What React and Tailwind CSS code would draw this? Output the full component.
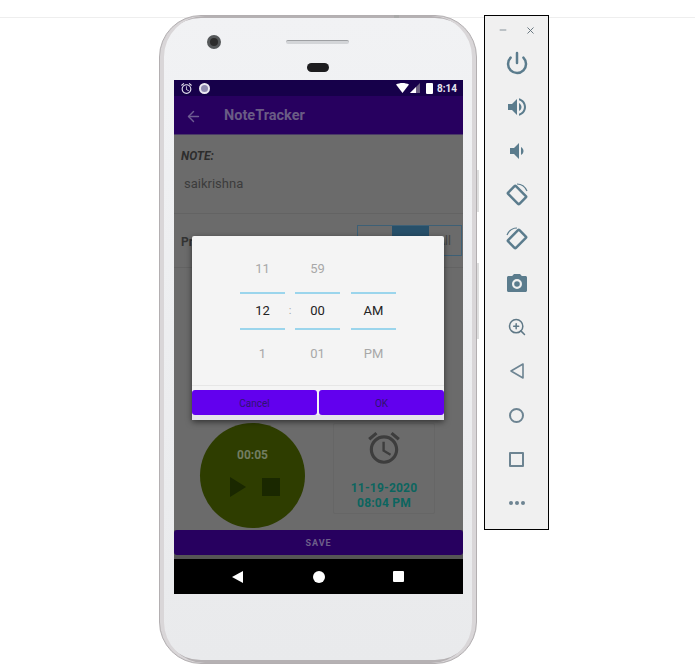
import React from 'react';
import { Power, ZoomIn, X, Minus, ArrowLeft } from 'lucide-react';

const ToolIcon = ({ children }) => (
  <div className="h-11 flex items-center justify-center">{children}</div>
);

const VolumeUp = () => (
  <svg width="24" height="24" viewBox="0 0 24 24" fill="#5b7c8d">
    <path d="M3 9v6h4l5 5V4L7 9H3zm13.5 3c0-1.77-1.02-3.29-2.5-4.03v8.05c1.48-.73 2.5-2.25 2.5-4.02zM14 3.23v2.06c2.89.86 5 3.54 5 6.71s-2.11 5.85-5 6.71v2.06c4.01-.91 7-4.49 7-8.77s-2.99-7.86-7-8.77z" />
  </svg>
);

const VolumeDown = () => (
  <svg width="24" height="24" viewBox="0 0 24 24" fill="#5b7c8d">
    <path d="M18.5 12c0-1.77-1.02-3.29-2.5-4.03v8.05c1.48-.73 2.5-2.25 2.5-4.02zM5 9v6h4l5 5V4L9 9H5z" />
  </svg>
);

const RotateRight = () => (
  <svg width="24" height="24" viewBox="0 0 24 24" fill="none" stroke="#5b7c8d">
    <rect x="4" y="6.5" width="16" height="11" rx="1" strokeWidth="2.5" transform="rotate(45 12 12)" />
    <path d="M12 1C16 1 20 3.5 22 8" strokeWidth="1.2" />
  </svg>
);

const RotateLeft = () => (
  <svg width="24" height="24" viewBox="0 0 24 24" fill="none" stroke="#5b7c8d">
    <rect x="4" y="6.5" width="16" height="11" rx="1" strokeWidth="2.5" transform="rotate(-45 12 12)" />
    <path d="M12 1C8 1 4 3.5 2 8" strokeWidth="1.2" />
  </svg>
);

const Camera = () => (
  <svg width="24" height="24" viewBox="0 0 24 24" fill="#5b7c8d">
    <path fillRule="evenodd" d="M9 3L7.17 5H3.5C2.7 5 2 5.7 2 6.5v13c0 .8.7 1.5 1.5 1.5h17c.8 0 1.5-.7 1.5-1.5v-13c0-.8-.7-1.5-1.5-1.5h-3.67L15 3H9zm3 15a5 5 0 1 1 0-10 5 5 0 0 1 0 10zm0-2.2a2.8 2.8 0 1 0 0-5.6 2.8 2.8 0 0 0 0 5.6z" />
  </svg>
);

const AlarmIcon = () => (
  <svg width="38" height="38" viewBox="0 0 24 24" fill="#3d3d3d">
    <path d="M22 5.72l-4.6-3.86-1.29 1.53 4.6 3.86L22 5.72zM7.88 3.39L6.6 1.86 2 5.71l1.29 1.53 4.59-3.85zM12.5 8H11v6l4.75 2.85.75-1.23-4-2.37V8zM12 4c-4.97 0-9 4.03-9 9s4.03 9 9 9 9-4.03 9-9-4.03-9-9-9zm0 16c-3.87 0-7-3.13-7-7s3.13-7 7-7 7 3.13 7 7-3.13 7-7 7z" />
  </svg>
);

const SidePanel = () => (
  <div className="w-[65px] h-[515px] border border-black bg-[#f0f0f0] shrink-0">
    <div className="h-[25px] flex items-center justify-between pl-[13px] pr-[12px] pt-[3px]">
      <Minus size={10} color="#7d8b93" strokeWidth={2.2} />
      <X size={11} color="#5f6f78" strokeWidth={2} />
    </div>
    <ToolIcon><Power size={24} color="#5b7c8d" strokeWidth={2.5} /></ToolIcon>
    <ToolIcon><VolumeUp /></ToolIcon>
    <ToolIcon><VolumeDown /></ToolIcon>
    <ToolIcon><RotateRight /></ToolIcon>
    <ToolIcon><RotateLeft /></ToolIcon>
    <ToolIcon><Camera /></ToolIcon>
    <ToolIcon><ZoomIn size={20} color="#5f7886" strokeWidth={1.8} /></ToolIcon>
    <ToolIcon>
      <svg width="18" height="18" viewBox="0 0 18 18" fill="none" stroke="#6d8492" strokeWidth="1.6">
        <path d="M15 2v14L3 9z" strokeLinejoin="round" />
      </svg>
    </ToolIcon>
    <ToolIcon><div className="w-[15px] h-[15px] rounded-full border-2 border-[#6d8492]" /></ToolIcon>
    <ToolIcon><div className="w-[15px] h-[15px] rounded-[1px] border-2 border-[#6d8492]" /></ToolIcon>
    <ToolIcon>
      <div className="flex gap-[2px]">
        <div className="w-1 h-1 rounded-full bg-[#6d8492]" />
        <div className="w-1 h-1 rounded-full bg-[#6d8492]" />
        <div className="w-1 h-1 rounded-full bg-[#6d8492]" />
      </div>
    </ToolIcon>
  </div>
);

const StatusBar = () => (
  <div className="h-4 bg-[#16004a] flex items-center justify-between pl-[6px] pr-[6px]">
    <div className="flex items-center gap-[6px]">
      <svg width="13" height="13" viewBox="0 0 24 24" fill="#e4e0ee">
        <path d="M22 5.72l-4.6-3.86-1.29 1.53 4.6 3.86L22 5.72zM7.88 3.39L6.6 1.86 2 5.71l1.29 1.53 4.59-3.85zM12.5 8H11v6l4.75 2.85.75-1.23-4-2.37V8zM12 4c-4.97 0-9 4.03-9 9s4.03 9 9 9 9-4.03 9-9-4.03-9-9-9zm0 16c-3.87 0-7-3.13-7-7s3.13-7 7-7 7 3.13 7 7-3.13 7-7 7z" />
      </svg>
      <div className="w-[11px] h-[11px] rounded-full bg-[#8f8ab0] border-2 border-[#ece9f2]" />
    </div>
    <div className="flex items-center">
      <svg width="13" height="10" viewBox="0 0 13 10" fill="#ffffff"><path d="M0 1.5C3.8-.5 9.2-.5 13 1.5L6.5 10z" /></svg>
      <svg width="11" height="10" viewBox="0 0 11 10" className="ml-[1px]">
        <path d="M0 10 10 0v10z" fill="#6a5f80" />
        <path d="M0 10 6 4v6z" fill="#ffffff" />
      </svg>
      <div className="w-[7px] h-[11px] bg-white rounded-[1px] ml-[5px]" />
      <span className="ml-[4px] pt-px text-[10px] leading-none font-bold text-[#e8e5ef]">8:14</span>
    </div>
  </div>
);

const PickerColumn = ({ top, mid, bottom }) => (
  <div className="w-[45px] flex flex-col items-center">
    <div className="h-[46px] w-full flex items-center justify-center text-[#a8a8a8]">{top}</div>
    <div className="h-[38px] w-full flex items-center justify-center border-y-2 border-[#9bd5ec] text-[#222222]">{mid}</div>
    <div className="h-[47px] w-full flex items-center justify-center text-[#a8a8a8]">{bottom}</div>
  </div>
);

const TimeDialog = () => (
  <div className="absolute left-[18px] top-[156px] w-[252px] h-[184px] rounded-[2px] bg-[#f4f4f4] shadow-[0_2px_6px_rgba(0,0,0,0.55)] flex flex-col">
    <div className="flex-1 flex justify-center text-[13px] pt-[10px]">
      <div className="flex">
        <PickerColumn top="11" mid="12" bottom="1" />
        <div className="w-[10px] h-[130px] flex items-center justify-center text-[#a8a8a8] text-[11px]">:</div>
        <PickerColumn top="59" mid="00" bottom="01" />
        <div className="w-[11px]" />
        <PickerColumn top="" mid="AM" bottom="PM" />
      </div>
    </div>
    <div className="border-t border-[#e6e6e6] pt-[4px]">
      <div className="flex justify-between">
        <div className="w-[125px] h-[25px] pt-px rounded-[3px] bg-[#6200ee] text-[#2f1470] text-[10px] flex items-center justify-center">Cancel</div>
        <div className="w-[125px] h-[25px] pt-px rounded-[3px] bg-[#6200ee] text-[#2f1470] text-[10px] flex items-center justify-center">OK</div>
      </div>
      <div className="h-[5px] bg-[#e4e4ea]" />
    </div>
  </div>
);

const NoteContent = () => (
  <div className="h-[395px] bg-[#6b6b6b] flex flex-col">
    <div className="h-[79px] border-b border-[#636363] px-[7px] pt-[13px]">
      <div className="text-[12px] leading-4 font-bold italic text-[#2d2d2d]">NOTE:</div>
      <div className="text-[13px] leading-4 text-[#3c3c3c] mt-3 pl-[3px]">saikrishna</div>
    </div>
    <div className="h-[54px] border-b border-[#636363] flex justify-between pl-[7px] pr-px pt-[11px]">
      <span className="text-[12px] leading-[34px] font-bold text-[#333333]">Priority</span>
      <div className="w-[105px] h-[31px] border border-[#3d6076] flex">
        <div className="w-[34px]" />
        <div className="w-[37px] bg-[#27506a]" />
        <div className="flex-1 flex items-center justify-center pr-[2px] text-[12px] text-[#444444]">All</div>
      </div>
    </div>
    <div className="flex-1 flex pl-[26px] pt-[155px]">
      <div className="w-[105px] h-[105px] rounded-full bg-[#2e3d00] flex flex-col items-center pt-[24px]">
        <span className="text-[12px] leading-4 font-bold text-[#727d62]">00:05</span>
        <div className="flex items-center gap-[16px] mt-[14px] pl-1">
          <svg width="16" height="20" viewBox="0 0 16 20" fill="#1a2800"><path d="M0 0l16 10L0 20z" /></svg>
          <div className="w-[18px] h-[18px] bg-[#1a2800]" />
        </div>
      </div>
      <div className="ml-[28px] w-[102px] h-[91px] border border-[#666666] rounded-[2px] flex flex-col items-center pt-[5px]">
        <AlarmIcon />
        <div className="mt-[14px] text-[12px] leading-[15px] font-bold text-[#0c655f] text-center tracking-[0.2px]">
          <div>11-19-2020</div>
          <div>08:04 PM</div>
        </div>
      </div>
    </div>
  </div>
);

const PhoneScreen = () => (
  <div className="relative w-[289px] h-[514px] ml-[14px]" style={{ fontFamily: 'Roboto, sans-serif' }}>
    <StatusBar />
    <div className="h-[39px] pt-[2px] bg-[#27005f] flex items-center pl-[11px] border-b border-[#4a3a66]">
      <ArrowLeft size={17} color="#6e5c92" strokeWidth={2} />
      <span className="ml-[22px] text-[14.5px] font-bold text-[#6a5c85]">NoteTracker</span>
    </div>
    <NoteContent />
    <div className="h-[29px] bg-[#555555]">
      <div className="h-[25px] pt-[2px] rounded-[3px] bg-[#27005f] flex items-center justify-center text-[9px] font-bold tracking-[1px] text-[#6d5e8a]">
        SAVE
      </div>
    </div>
    <div className="h-[35px] bg-black flex items-center justify-between pl-[58px] pr-[59px]">
      <svg width="12" height="12" viewBox="0 0 12 12" fill="#ffffff"><path d="M11 0v12L0 6z" /></svg>
      <div className="w-3 h-3 rounded-full bg-white" />
      <div className="w-[11px] h-[11px] bg-white rounded-[1px]" />
    </div>
    <TimeDialog />
  </div>
);

const Phone = () => (
  <div className="relative w-[318px] h-[649px] shrink-0 rounded-[42px] border border-[#b3afb1] bg-gradient-to-b from-[#f1f2f4] to-[#e9eaec] shadow-[inset_4px_0_0_#d9d6d8,inset_-4px_0_0_#d9d6d8,inset_0_2px_0_#b5b1b3,inset_0_-3px_0_#b5b1b3]">
    {/* side keys and top notch */}
    <div className="absolute -right-[3px] top-[154px] w-[2px] h-[42px] bg-[#dfdfdf]" />
    <div className="absolute -right-[3px] top-[247px] w-[2px] h-[76px] bg-[#dfdfdf]" />
    <div className="absolute left-[234px] -top-px w-[5px] h-[3px] bg-[#a9a9a9]" />
    <div className="h-[64px]">
      <div className="flex items-center pt-[19px] pl-[47px]">
        <div className="w-[14px] h-[14px] rounded-full bg-[#2c2c2c] border-[3px] border-[#55585a]" />
        <div className="ml-[65px] w-[63px] h-[4px] rounded-full bg-[#d3d5d8] border-t border-[#9ea0a3]" />
      </div>
      <div className="mt-[14px] ml-[147px] w-[22px] h-[9px] rounded-full bg-[#1d1d1f]" />
    </div>
    <PhoneScreen />
  </div>
);

export default function App() {
  return (
    <div className="relative w-[695px] h-[665px] bg-white overflow-hidden">
      <div className="absolute left-0 right-0 top-[17px] h-px bg-[#eeeeee]" />
      <div className="relative flex items-start pl-[159px] pt-[15px] gap-[7px]">
        <Phone />
        <SidePanel />
      </div>
    </div>
  );
}
